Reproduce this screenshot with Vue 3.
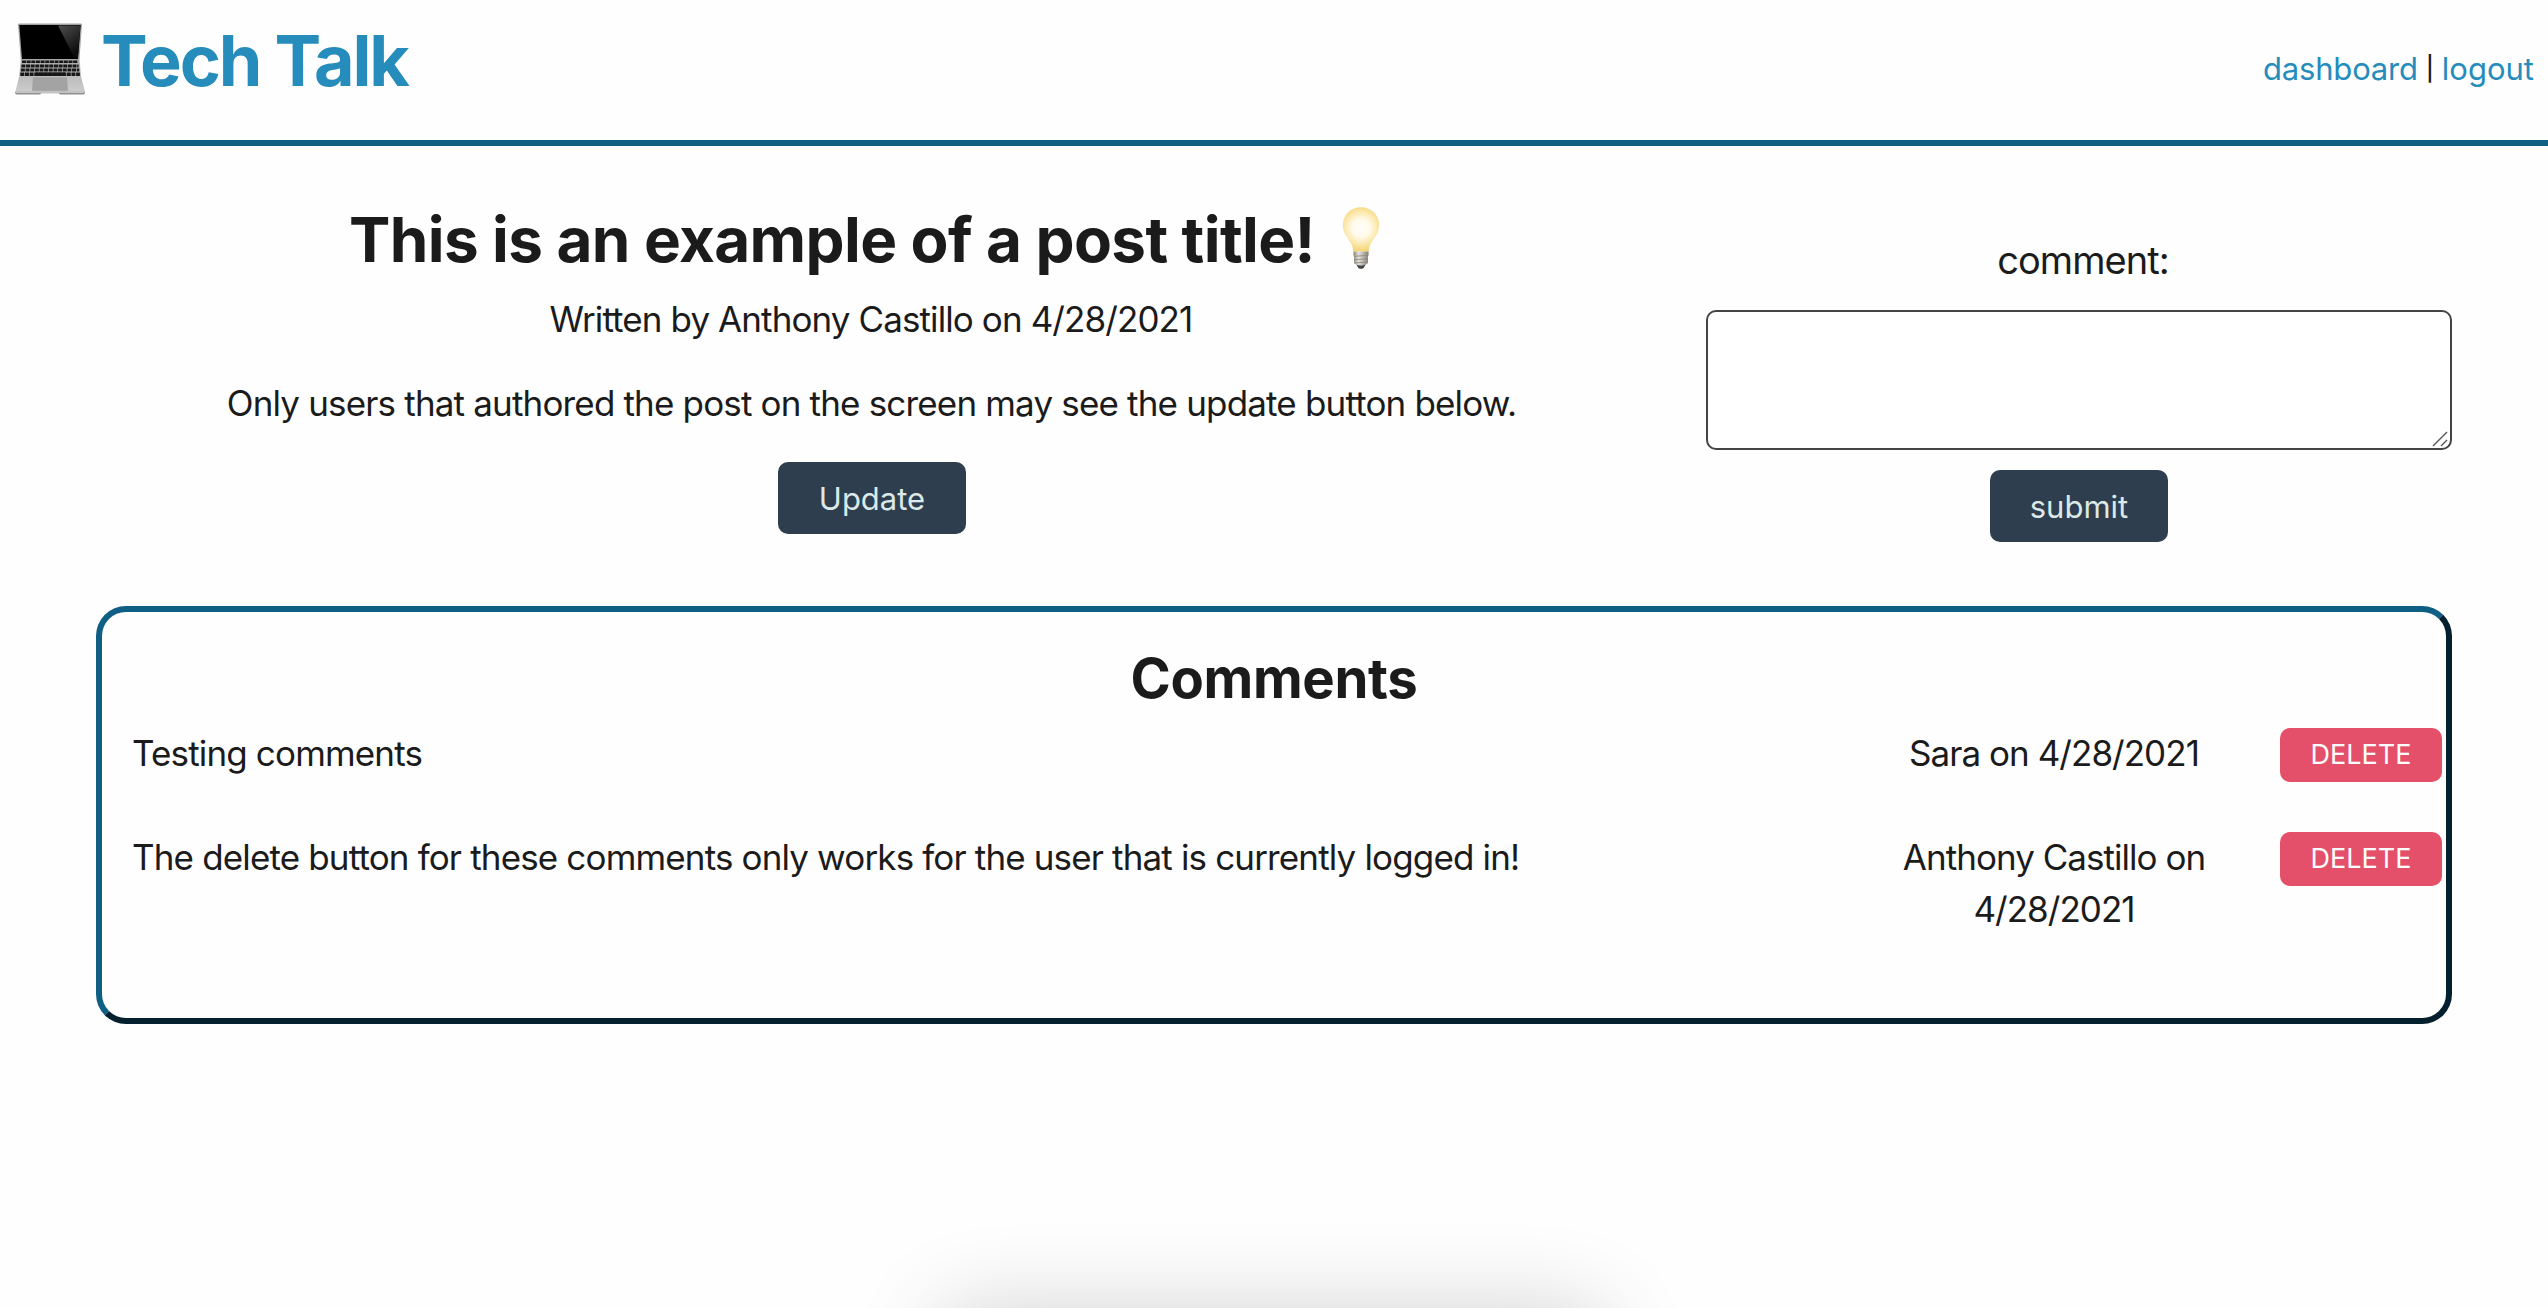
<script setup>
import { ref } from 'vue'

const draft = ref('')
const comments = [
  { id: 1, text: 'Testing comments', meta: 'Sara on 4/28/2021' },
  {
    id: 2,
    text: 'The delete button for these comments only works for the user that is currently logged in!',
    meta: 'Anthony Castillo on 4/28/2021',
  },
]
const keyRows = [
  { y: 60.5, h: 2.6, x: 22, w: 56 },
  { y: 64.5, h: 3, x: 21.4, w: 57.2 },
  { y: 68.5, h: 3, x: 20.9, w: 58.4 },
  { y: 72.5, h: 3.4, x: 20.3, w: 59.6 },
]
</script>

<template>
  <div class="page">
    <header class="header">
      <h1 class="brand">
        <svg class="laptop" viewBox="14 22 72 74" aria-hidden="true">
          <defs>
            <linearGradient id="glare" x1="0" y1="0" x2="0.5" y2="1">
              <stop offset="0" stop-color="#4e4e4e" />
              <stop offset="1" stop-color="#0b0b0b" />
            </linearGradient>
            <linearGradient id="deck" x1="0" y1="0" x2="0" y2="1">
              <stop offset="0" stop-color="#a9a9a9" />
              <stop offset="1" stop-color="#cecece" />
            </linearGradient>
          </defs>
          <path d="M18 24.5Q18 23.4 19.2 23.4H80.8Q82 23.4 82 24.5L79.4 60H20.8Z" fill="#a2a2a2" />
          <path d="M19.3 25H80.7L78 59H22Z" fill="#000" />
          <path d="M58 25.5H80.4L77.8 58H74.5Z" fill="url(#glare)" />
          <path d="M20.8 59.5H79.4L81.2 77L85 92Q85.3 93.6 83.6 93.6H60L58.6 92.8H41.4L40 93.6H16.8Q15 93.6 15.3 92L19 77Z" fill="url(#deck)" />
          <path d="M15.2 91.8H85L85 93Q84.7 94.4 83.4 94.4H60L58.8 93.2H41.2L40 94.4H16.8Q15.2 94.3 15.2 93Z" fill="#8f8f8f" />
          <path d="M15.8 91.8H84.4V92.8H15.8Z" fill="#d6d6d6" />
          <path d="M33.4 77.8H66.6L67.6 90.6H32.4Z" fill="#a3a3a3" stroke="#989898" stroke-width=".5" />
          <line
            v-for="row in keyRows"
            :key="row.y"
            :x1="row.x"
            :x2="row.x + row.w"
            :y1="row.y + row.h / 2"
            :y2="row.y + row.h / 2"
            stroke="#171717"
            :stroke-width="row.h"
            stroke-dasharray="4 .65"
          />
          <path d="M35.2 72.5H65V75.9H35.2Z" fill="#171717" />
        </svg>
        <span>Tech Talk</span>
      </h1>
      <nav class="nav">
        <a class="wide">dashboard</a>
        <span class="pipe">|</span>
        <a>logout</a>
      </nav>
    </header>

    <main class="main">
      <div class="top">
        <section class="post">
          <h2 class="title">
            <span>This is an example of a post title!</span>
            <svg class="bulb" viewBox="0 0 80 80" aria-hidden="true">
              <defs>
                <radialGradient id="glow" cx="46" cy="28" r="25" gradientUnits="userSpaceOnUse">
                  <stop offset="0" stop-color="#fffefb" />
                  <stop offset=".35" stop-color="#fffaea" />
                  <stop offset=".62" stop-color="#fbeab2" />
                  <stop offset="1" stop-color="#f3ce64" />
                </radialGradient>
                <linearGradient id="screw" x1="0" y1="0" x2="1" y2="0">
                  <stop offset="0" stop-color="#8f887c" />
                  <stop offset=".35" stop-color="#e4e1dc" />
                  <stop offset="1" stop-color="#847e76" />
                </linearGradient>
              </defs>
              <path d="M46 7.2C56.4 7.2 64.2 15 64.2 25.2C64.2 37 54.4 39.6 53.6 51.6H38.4C37.6 39.6 27.8 37 27.8 25.2C27.8 15 35.6 7.2 46 7.2Z" fill="url(#glow)" />
              <path d="M38.4 51.6H53.6V55L53 56V62.5Q52 65.4 46 65.4Q40 65.4 39 62.5V56L38.4 55Z" fill="url(#screw)" />
              <path d="M38.8 56.3L53.2 55.3M39 59.8L53 58.8M39.4 63L52.6 62" stroke="#8b857c" stroke-width=".8" />
              <path d="M41.5 64.8Q46 66.3 50.5 64.8L48.6 68Q46 69.7 43.4 68Z" fill="#454441" />
            </svg>
          </h2>
          <p class="byline">Written by Anthony Castillo on 4/28/2021</p>
          <p class="body">Only users that authored the post on the screen may see the update button below.</p>
          <button class="btn update">Update</button>
        </section>

        <form class="form" @submit.prevent>
          <label class="label" for="comment">comment:</label>
          <div class="field">
            <textarea id="comment" v-model="draft"></textarea>
            <svg class="grip" viewBox="0 0 16 16" aria-hidden="true">
              <path d="M1 15L15 1M9 15L15 9" stroke="#555" stroke-width="1.4" fill="none" />
            </svg>
          </div>
          <button class="btn submit">submit</button>
        </form>
      </div>

      <section class="card">
        <h3 class="heading">Comments</h3>
        <article v-for="c in comments" :key="c.id" class="row">
          <p class="text">{{ c.text }}</p>
          <p class="meta">{{ c.meta }}</p>
          <button class="delete">DELETE</button>
        </article>
      </section>
    </main>
    <div class="shade"></div>
  </div>
</template>

<style>
body {
  background: #fefefe;
}
</style>

<style scoped>
.page {
  position: relative;
  height: 1308px;
  overflow: hidden;
  box-sizing: border-box;
  font-family: Inter, "Liberation Sans", sans-serif;
  font-size: 35px;
  line-height: 52px;
  letter-spacing: -0.85px;
  color: #1b1b1b;
}
h1, h2, h3, p { margin: 0; }
button {
  display: block;
  border: 0;
  padding: 0;
  border-radius: 10px;
  font-family: inherit;
  letter-spacing: 0;
}
.header {
  display: flex;
  justify-content: space-between;
  height: 140px;
  padding: 0 14px;
  border-bottom: 6px solid #0f5e84;
}
.brand {
  display: flex;
  gap: 15px;
  padding-top: 18px;
  font-size: 70px;
  line-height: 86px;
  letter-spacing: -2.15px;
  color: #258cbc;
}
.laptop {
  width: 72px;
  height: 74px;
  margin-top: 4px;
}
.nav {
  display: flex;
  padding-top: 49px;
  font-size: 31px;
  line-height: 40px;
  letter-spacing: 0;
}
.nav a { color: #258cbc; }
.nav .wide { letter-spacing: -0.19px; }
.pipe {
  width: 24px;
  text-align: center;
  font-size: 24px;
  font-weight: 500;
}
.main { padding: 54px 96px 0; }
.top {
  display: flex;
  gap: 58px;
  height: 406px;
}
.post {
  width: 1552px;
  text-align: center;
}
.title {
  display: flex;
  justify-content: center;
  font-size: 62px;
  line-height: 80px;
  letter-spacing: -0.62px;
}
.bulb {
  width: 80px;
  height: 80px;
}
.byline { margin-top: 13px; padding-right: 2px; letter-spacing: -0.9px; }
.body { margin-top: 32px; padding-right: 1px; letter-spacing: -0.83px; }
.btn {
  height: 72px;
  padding-top: 1px;
  font-size: 31px;
  line-height: 71px;
  background: #2e3e4e;
  color: #dbe9e8;
}
.update { width: 188px; margin: 33px auto 0; }
.submit { width: 178px; margin: 20px auto 0; }
.form {
  width: 746px;
  padding-top: 34px;
}
.label {
  display: block;
  padding-left: 8px;
  text-align: center;
  font-size: 38px;
  letter-spacing: -0.93px;
}
.field {
  position: relative;
  height: 140px;
  margin-top: 24px;
}
textarea {
  display: block;
  box-sizing: border-box;
  width: 100%;
  height: 100%;
  border: 2px solid #444;
  border-radius: 10px;
  background: #fff;
  font: inherit;
  resize: none;
}
.grip {
  position: absolute;
  right: 4px;
  bottom: 3px;
  width: 16px;
  height: 16px;
}
.card {
  box-sizing: border-box;
  height: 418px;
  padding: 33px 4px 0 30px;
  border: 6px solid;
  border-color: #0f5e84 #04202e #04202e #0f5e84;
  border-radius: 30px;
}
.heading {
  margin: 0 0 16px -26px;
  text-align: center;
  font-size: 54.5px;
  line-height: 66px;
  letter-spacing: -0.35px;
}
.row {
  display: flex;
  align-items: flex-start;
  min-height: 104px;
}
.text { flex: 1; }
.meta {
  width: 370px;
  margin-right: 41px;
  text-align: center;
  letter-spacing: -0.96px;
}
.delete {
  width: 162px;
  height: 54px;
  margin-top: 1px;
  font-size: 27px;
  line-height: 54px;
  background: #e44f6a;
  color: #fff;
}
.shade {
  position: absolute;
  top: 1312px;
  left: 942px;
  width: 660px;
  height: 200px;
  border-radius: 20px;
  box-shadow: 0 0 90px rgba(0, 0, 0, 0.19);
}
</style>
